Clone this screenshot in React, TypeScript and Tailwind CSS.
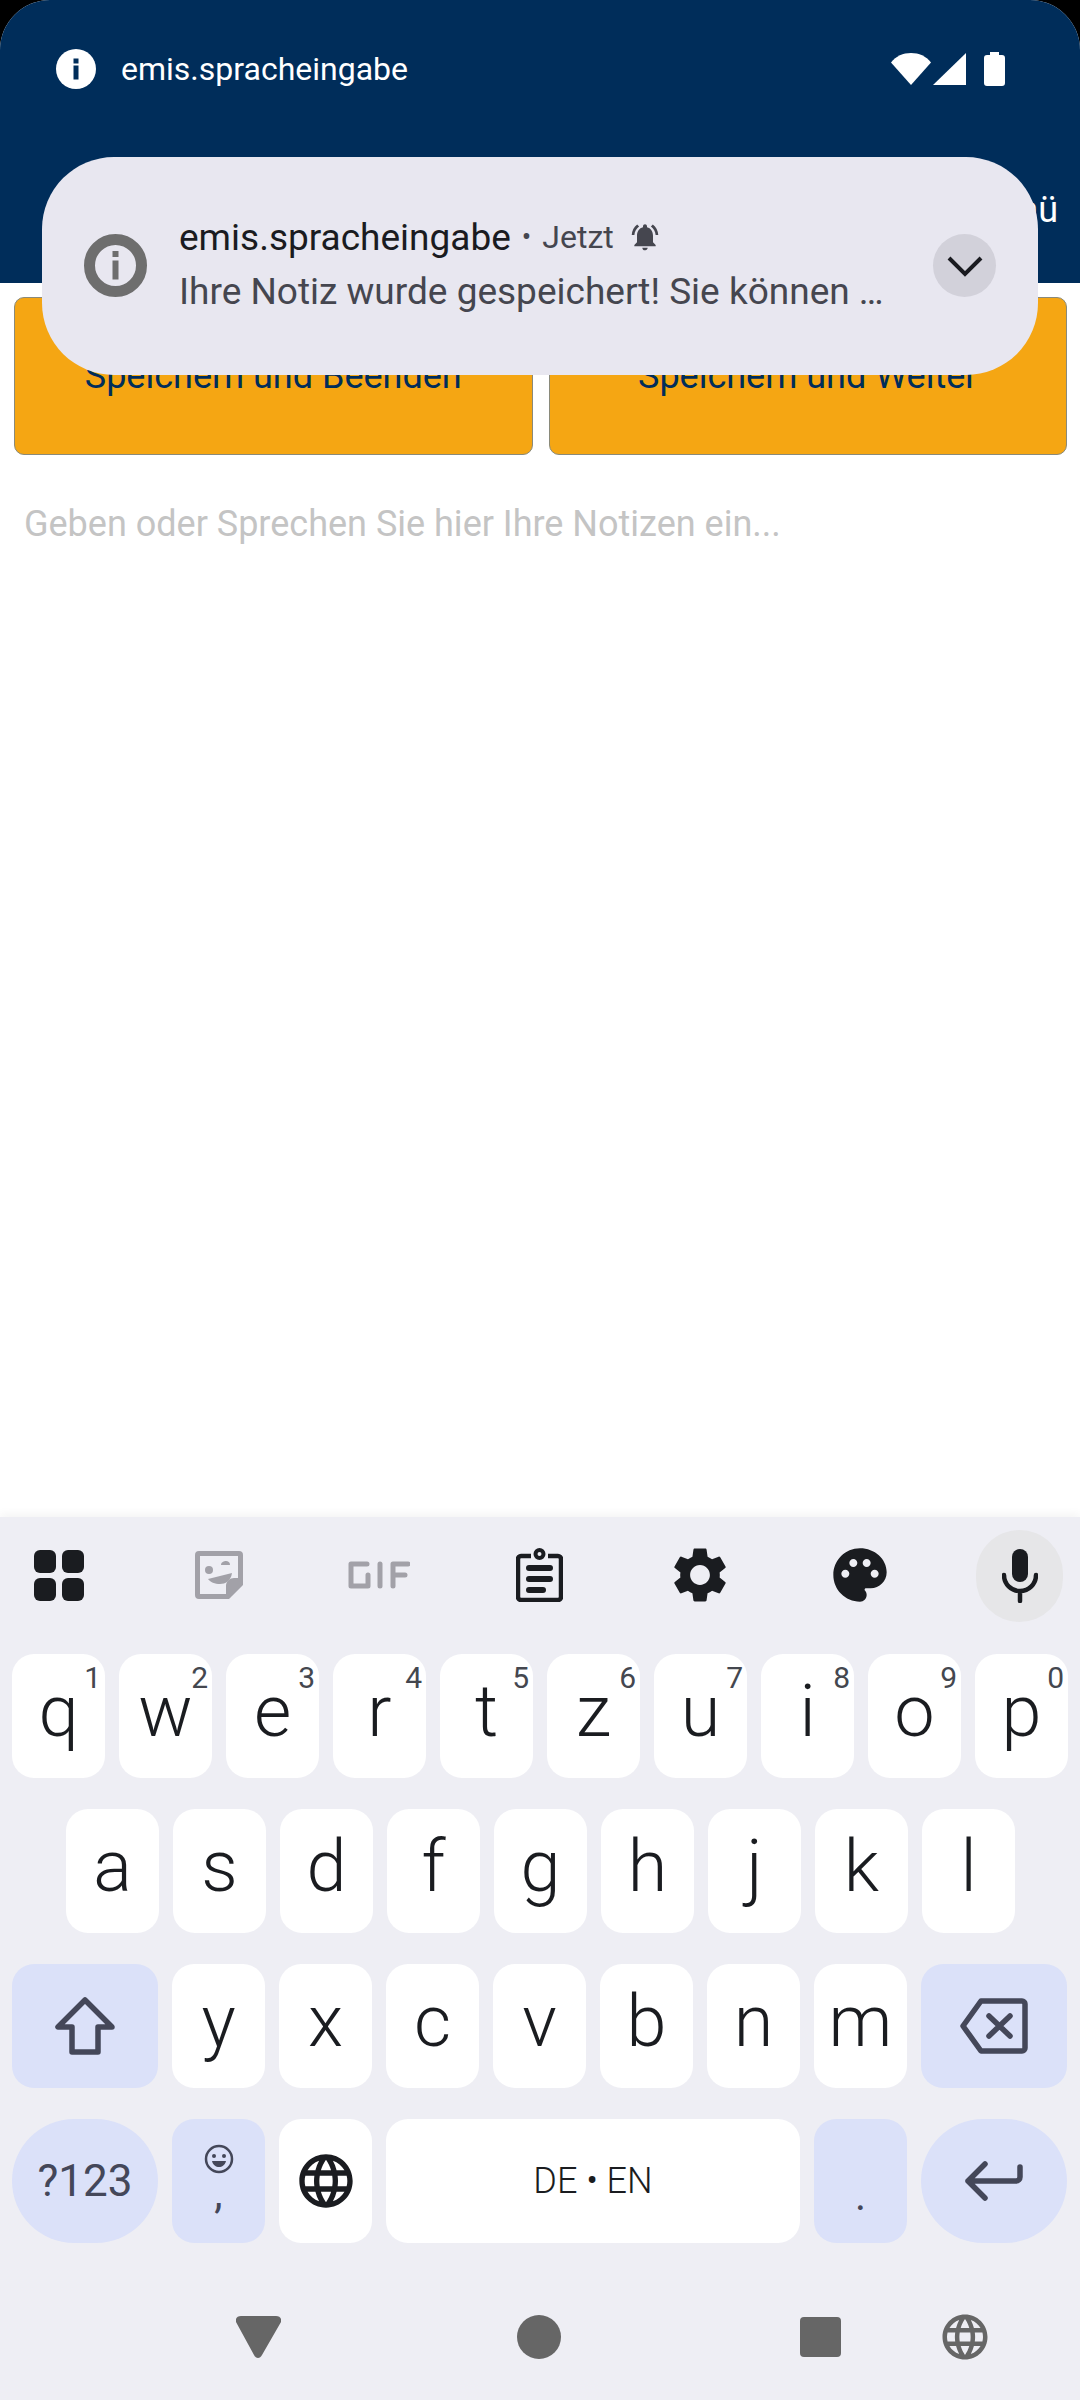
import type { ReactNode } from 'react';

const ROW_1 = [
  ['q', '1'], ['w', '2'], ['e', '3'], ['r', '4'], ['t', '5'],
  ['z', '6'], ['u', '7'], ['i', '8'], ['o', '9'], ['p', '0'],
];
const ROW_2 = ['a', 's', 'd', 'f', 'g', 'h', 'j', 'k', 'l'];
const ROW_3 = ['y', 'x', 'c', 'v', 'b', 'n', 'm'];

const GLOBE =
  'M11.99 2C6.47 2 2 6.48 2 12s4.47 10 9.99 10C17.52 22 22 17.52 22 12S17.52 2 11.99 2zm6.93 6h-2.95c-.32-1.25-.78-2.45-1.38-3.56 1.84.63 3.37 1.91 4.33 3.56zM12 4.04c.83 1.2 1.48 2.53 1.91 3.96h-3.82c.43-1.43 1.08-2.76 1.91-3.96zM4.26 14C4.1 13.36 4 12.69 4 12s.1-1.36.26-2h3.38c-.08.66-.14 1.32-.14 2 0 .68.06 1.34.14 2H4.26zm.82 2h2.95c.32 1.25.78 2.45 1.38 3.56-1.84-.63-3.37-1.9-4.33-3.56zm2.95-8H5.08c.96-1.66 2.49-2.93 4.33-3.56C8.81 5.55 8.35 6.75 8.03 8zM12 19.96c-.83-1.2-1.48-2.53-1.91-3.96h3.82c-.43 1.43-1.08 2.76-1.91 3.96zM14.34 14H9.66c-.09-.66-.16-1.32-.16-2 0-.68.07-1.35.16-2h4.68c.09.65.16 1.32.16 2 0 .68-.07 1.34-.16 2zm.25 5.56c.6-1.11 1.06-2.31 1.38-3.56h2.95c-.96 1.65-2.49 2.93-4.33 3.56zM16.36 14c.08-.66.14-1.32.14-2 0-.68-.06-1.34-.14-2h3.38c.16.64.26 1.31.26 2s-.1 1.36-.26 2h-3.38z';
const GEAR =
  'M19.14 12.94c.04-.3.06-.61.06-.94 0-.32-.02-.64-.07-.94l2.03-1.58c.18-.14.23-.41.12-.61l-1.92-3.32c-.12-.22-.37-.29-.59-.22l-2.39.96c-.5-.38-1.03-.7-1.62-.94l-.36-2.54c-.04-.24-.24-.41-.48-.41h-3.84c-.24 0-.43.17-.47.41l-.36 2.54c-.59.24-1.13.57-1.62.94l-2.39-.96c-.22-.08-.47 0-.59.22L2.74 8.87c-.12.21-.08.47.12.61l2.03 1.58c-.05.3-.09.63-.09.94s.02.64.07.94l-2.03 1.58c-.18.14-.23.41-.12.61l1.92 3.32c.12.22.37.29.59.22l2.39-.96c.5.38 1.03.7 1.62.94l.36 2.54c.05.24.24.41.48.41h3.84c.24 0 .44-.17.47-.41l.36-2.54c.59-.24 1.13-.56 1.62-.94l2.39.96c.22.08.47 0 .59-.22l1.92-3.32c.12-.22.07-.47-.12-.61l-2.01-1.58zM12 15.6c-1.98 0-3.6-1.62-3.6-3.6s1.62-3.6 3.6-3.6 3.6 1.62 3.6 3.6-1.62 3.6-3.6 3.6z';
const PALETTE =
  'M12 2C6.49 2 2 6.49 2 12s4.49 10 10 10c1.38 0 2.5-1.12 2.5-2.5 0-.61-.23-1.2-.64-1.67-.08-.1-.13-.21-.13-.33 0-.28.22-.5.5-.5H16c3.31 0 6-2.69 6-6 0-4.96-4.49-9-10-9zm5.5 11c-.83 0-1.5-.67-1.5-1.5s.67-1.5 1.5-1.5 1.5.67 1.5 1.5-.67 1.5-1.5 1.5zm-3-4c-.83 0-1.5-.67-1.5-1.5S13.67 6 14.5 6s1.5.67 1.5 1.5S15.33 9 14.5 9zM5 11.5c0-.83.67-1.5 1.5-1.5s1.5.67 1.5 1.5S7.33 13 6.5 13 5 12.33 5 11.5zm6-4c0 .83-.67 1.5-1.5 1.5S8 8.33 8 7.5 8.67 6 9.5 6s1.5.67 1.5 1.5z';
const BELL =
  'M7.58 4.08 6.15 2.65C3.75 4.48 2.17 7.3 2.03 10.5h2c.15-2.65 1.51-4.97 3.55-6.42zm12.39 6.42h2c-.15-3.2-1.73-6.02-4.12-7.85l-1.42 1.43c2.02 1.45 3.39 3.77 3.54 6.42zM18 11c0-3.07-1.64-5.64-4.5-6.32V4c0-.83-.67-1.5-1.5-1.5s-1.5.67-1.5 1.5v.68C7.63 5.36 6 7.92 6 11v5l-2 2v1h16v-1l-2-2v-5zm-6 11c.14 0 .27-.01.4-.04.65-.14 1.18-.58 1.44-1.18.1-.24.15-.5.15-.78h-4c.01 1.1.9 2 2.01 2z';

function LetterKey({ label, hint }: { label: string; hint?: string }) {
  return (
    <div className="relative flex h-[124px] w-[93px] shrink-0 items-center justify-center rounded-[22px] bg-white pb-[8px] text-[72px] font-[350] leading-none text-[#1a1c20]">
      {label}
      {hint && (
        <span className="absolute right-[4px] top-[6px] text-[30px] font-normal leading-[36px] text-[#44474f]">
          {hint}
        </span>
      )}
    </div>
  );
}

function ModKey({ className, children }: { className: string; children: ReactNode }) {
  return (
    <div className={`flex h-[124px] shrink-0 items-center justify-center bg-[#dbe1f9] text-[#444759] ${className}`}>
      {children}
    </div>
  );
}

function ToolbarSlot({ children }: { children: ReactNode }) {
  return <div className="flex h-[92px] w-[80px] items-center justify-center pb-[2px]">{children}</div>;
}

export default function App() {
  return (
    <div className="h-[2400px] w-[1080px] overflow-hidden bg-black font-['Roboto',sans-serif]">
      <div className="relative flex h-full flex-col overflow-hidden rounded-t-[50px] bg-white">
        {/* app header, the status bar sits on top of it */}
        <header className="flex h-[283px] shrink-0 flex-col bg-[#002d5a] text-white">
          <div className="flex h-[138px] items-center pl-[56px] pr-[75px]">
            <svg width="40" height="40" viewBox="0 0 40 40">
              <circle cx="20" cy="20" r="20" fill="#fff" />
              <rect x="17.5" y="16.5" width="5" height="14" fill="#002d5a" />
              <rect x="17.5" y="9.5" width="5" height="5" fill="#002d5a" />
            </svg>
            <span className="ml-[25px] text-[32px] leading-none">emis.spracheingabe</span>
            <div className="ml-auto flex items-center">
              <svg width="40" height="34" viewBox="0 0 40 34">
                <path d="M0 10.5C5 4 12 1 20 1s15 3 20 9.5L20 33z" fill="#fff" />
              </svg>
              <svg className="ml-[2px]" width="33" height="34" viewBox="0 0 33 34">
                <path d="M33 1v32H0z" fill="#fff" />
              </svg>
              <svg className="ml-[18px]" width="21" height="34" viewBox="0 0 21 34">
                <path d="M6 3V0h9v3h3a3 3 0 0 1 3 3v25a3 3 0 0 1-3 3H3a3 3 0 0 1-3-3V6a3 3 0 0 1 3-3z" fill="#fff" />
              </svg>
            </div>
          </div>
          <div className="mt-[50px] pr-[22px] text-right text-[36px] leading-[44px]">Menü</div>
        </header>

        <div className="flex shrink-0 gap-[16px] pl-[14px] pr-[13px] pt-[14px]">
          <button className="h-[158px] flex-1 rounded-[10px] border border-[#8a8a7a] bg-[#f5a613] text-[36px] text-[#002d5a]">
            Speichern und Beenden
          </button>
          <button className="h-[158px] flex-1 rounded-[10px] border border-[#8a8a7a] bg-[#f5a613] text-[36px] text-[#002d5a]">
            Speichern und Weiter
          </button>
        </div>

        <p className="px-[24px] pt-[47px] text-[36px] leading-[44px] text-[#c4c4c4]">
          Geben oder Sprechen Sie hier Ihre Notizen ein...
        </p>

        {/* heads-up notification */}
        <div className="absolute left-[42px] top-[157px] flex h-[218px] w-[996px] rounded-[72px] bg-[#e8e7f0] pl-[42px] pr-[42px] pt-[62px]">
          <svg className="mt-[15px] shrink-0" width="63" height="63" viewBox="0 0 63 63">
            <circle cx="31.5" cy="31.5" r="26" fill="none" stroke="#6e6e6e" strokeWidth="11" />
            <rect x="28.5" y="26.5" width="6" height="19" fill="#6e6e6e" />
            <rect x="28.5" y="17" width="6" height="6" fill="#6e6e6e" />
          </svg>
          <div className="ml-[32px] flex min-w-0 flex-1 flex-col">
            <div className="flex h-[36px] items-center whitespace-nowrap">
              <span className="text-[37px] leading-none text-[#1a1b20]">emis.spracheingabe</span>
              <span className="ml-[11px] text-[28px] leading-none text-[#45464f]">•</span>
              <span className="ml-[11px] text-[32px] leading-none text-[#45464f]">Jetzt</span>
              <svg className="ml-[15px]" width="32" height="32" viewBox="0 0 24 24" fill="#45464f">
                <path d={BELL} />
              </svg>
            </div>
            <div className="mt-[17px] whitespace-nowrap text-[37px] leading-[40px] text-[#45464f]">
              Ihre Notiz wurde gespeichert! Sie können …
            </div>
          </div>
          <div className="mt-[15px] flex h-[63px] w-[63px] shrink-0 items-center justify-center rounded-full bg-[#d2d1da]">
            <svg width="36" height="22" viewBox="0 0 36 22" fill="none" stroke="#1a1b20" strokeWidth="4">
              <path d="M2 3l16 16L34 3" />
            </svg>
          </div>
        </div>

        {/* keyboard */}
        <div className="mt-auto flex h-[883px] shrink-0 flex-col bg-[#eeeef4] shadow-[0_-4px_8px_rgba(0,0,0,0.04)]">
          <div className="flex items-center justify-between pl-[19px] pr-[20px] pt-[13px]">
            <ToolbarSlot>
              <svg width="50" height="51" viewBox="0 0 50 51" fill="#1a1c20">
                <rect x="0" y="0" width="22" height="23" rx="6" />
                <rect x="28" y="0" width="22" height="23" rx="6" />
                <rect x="0" y="28" width="22" height="23" rx="6" />
                <rect x="28" y="28" width="22" height="23" rx="6" />
              </svg>
            </ToolbarSlot>
            <ToolbarSlot>
              <svg width="48" height="48" viewBox="0 0 48 48" fill="#a2a1a8">
                <path d="M4 0h40a4 4 0 0 1 4 4v30L34 48H4a4 4 0 0 1-4-4V4a4 4 0 0 1 4-4zm1 5v38h26v-8c0-5 4-8 8-8h4V5z" fillRule="evenodd" />
                <circle cx="14" cy="19" r="4" />
                <path d="M26 14c0-3 3-4 5-4s4 1 4 4z" />
                <path d="M13 28l24-6c-1 8-7 11-12 11-5 0-10-2-12-5z" />
              </svg>
            </ToolbarSlot>
            <ToolbarSlot>
              <svg width="62" height="28" viewBox="0 0 62 28" fill="none" stroke="#a2a1a8" strokeWidth="5" strokeLinecap="round" strokeLinejoin="round">
                <path d="M19 3H3v22h17V14" />
                <path d="M32 3v22" />
                <path d="M45 25V3h15M45 14h12" />
              </svg>
            </ToolbarSlot>
            <ToolbarSlot>
              <svg width="47" height="54" viewBox="0 0 47 54" fill="none" stroke="#1a1c20">
                <path d="M15 8H5a3 3 0 0 0-3 3v38a3 3 0 0 0 3 3h37a3 3 0 0 0 3-3V11a3 3 0 0 0-3-3H32" strokeWidth="4.5" />
                <circle cx="23.5" cy="6" r="4" strokeWidth="4" />
                <path d="M13 20h21M13 31h21M13 42h14" strokeWidth="6" strokeLinecap="round" />
              </svg>
            </ToolbarSlot>
            <ToolbarSlot>
              <svg width="66" height="66" viewBox="0 0 24 24" fill="#1a1c20">
                <path d={GEAR} />
              </svg>
            </ToolbarSlot>
            <ToolbarSlot>
              <svg width="64" height="64" viewBox="0 0 24 24" fill="#1a1c20">
                <path d={PALETTE} />
              </svg>
            </ToolbarSlot>
            <div className="flex h-[92px] w-[80px] items-center justify-center">
              <div className="flex h-[92px] w-[87px] shrink-0 items-center justify-center rounded-full bg-[#e6e6e8]">
                <svg width="36" height="54" viewBox="0 0 36 54" fill="none">
                  <rect x="10" y="0" width="16" height="33" rx="8" fill="#1a1c20" />
                  <path d="M2 26c0 9 7 16 16 16s16-7 16-16M18 42v10" stroke="#1a1c20" strokeWidth="4.5" strokeLinecap="round" />
                </svg>
              </div>
            </div>
          </div>

          <div className="mt-[32px] flex flex-col gap-[31px]">
            <div className="flex gap-[14px] px-[12px]">
              {ROW_1.map(([label, hint]) => (
                <LetterKey key={label} label={label} hint={hint} />
              ))}
            </div>
            <div className="flex gap-[14px] pl-[66px]">
              {ROW_2.map((label) => (
                <LetterKey key={label} label={label} />
              ))}
            </div>
            <div className="flex gap-[14px] px-[12px]">
              <ModKey className="w-[146px] rounded-[22px]">
                <svg width="60" height="58" viewBox="0 0 60 58" fill="none" stroke="#444759" strokeWidth="5.5" strokeLinejoin="round">
                  <path d="M30 3L3 30h14v25h26V30h14z" />
                </svg>
              </ModKey>
              {ROW_3.map((label) => (
                <LetterKey key={label} label={label} />
              ))}
              <ModKey className="w-[146px] rounded-[22px]">
                <svg width="68" height="56" viewBox="0 0 68 56" fill="none" stroke="#444759" strokeWidth="5.5" strokeLinejoin="round" strokeLinecap="round">
                  <path d="M21 3h41a3 3 0 0 1 3 3v44a3 3 0 0 1-3 3H21L3 28z" />
                  <path d="M29 18l21 20M50 18L29 38" />
                </svg>
              </ModKey>
            </div>
            <div className="flex gap-[14px] px-[12px]">
              <ModKey className="w-[146px] rounded-full text-[44px]">?123</ModKey>
              <ModKey className="w-[93px] flex-col rounded-[22px]">
                <svg className="mt-[-4px]" width="30" height="30" viewBox="0 0 30 30">
                  <circle cx="15" cy="15" r="13" fill="none" stroke="#444759" strokeWidth="2.5" />
                  <circle cx="10" cy="12" r="2" fill="#444759" />
                  <circle cx="20" cy="12" r="2" fill="#444759" />
                  <path d="M8 17h14c-1 4-4 6-7 6s-6-2-7-6z" fill="#444759" />
                </svg>
                <span className="mt-[8px] h-[32px] text-[42px] leading-[24px]">,</span>
              </ModKey>
              <div className="flex h-[124px] w-[93px] shrink-0 items-center justify-center rounded-[22px] bg-white">
                <svg width="64" height="64" viewBox="0 0 24 24" fill="#1a1c20">
                  <path d={GLOBE} />
                </svg>
              </div>
              <div className="flex h-[124px] w-[414px] shrink-0 items-center justify-center rounded-[22px] bg-white text-[36px] font-light text-[#1a1c20]">
                DE • EN
              </div>
              <ModKey className="w-[93px] rounded-[22px]">
                <span className="mt-[30px] text-[42px] leading-none">.</span>
              </ModKey>
              <ModKey className="w-[146px] rounded-full">
                <svg width="58" height="40" viewBox="0 0 58 40" fill="none" stroke="#444759" strokeWidth="5.5" strokeLinecap="round" strokeLinejoin="round">
                  <path d="M20 3L3 20l17 17M3 20h48a4 4 0 0 0 4-4V6" />
                </svg>
              </ModKey>
            </div>
          </div>

          {/* navigation bar */}
          <div className="mt-[67px] flex items-center pl-[236px]">
            <svg width="45" height="42" viewBox="0 0 45 42" fill="#666">
              <path d="M5 0h35c4 0 6 3 5 6L26 39c-2 4-6 4-8 0L0 6C-1 3 1 0 5 0z" />
            </svg>
            <div className="ml-[236px] h-[44px] w-[44px] rounded-full bg-[#666]" />
            <div className="ml-[239px] h-[40px] w-[41px] rounded-[4px] bg-[#666]" />
            <svg className="ml-[97px]" width="54" height="54" viewBox="0 0 24 24" fill="#666">
              <path d={GLOBE} />
            </svg>
          </div>
        </div>
      </div>
    </div>
  );
}
